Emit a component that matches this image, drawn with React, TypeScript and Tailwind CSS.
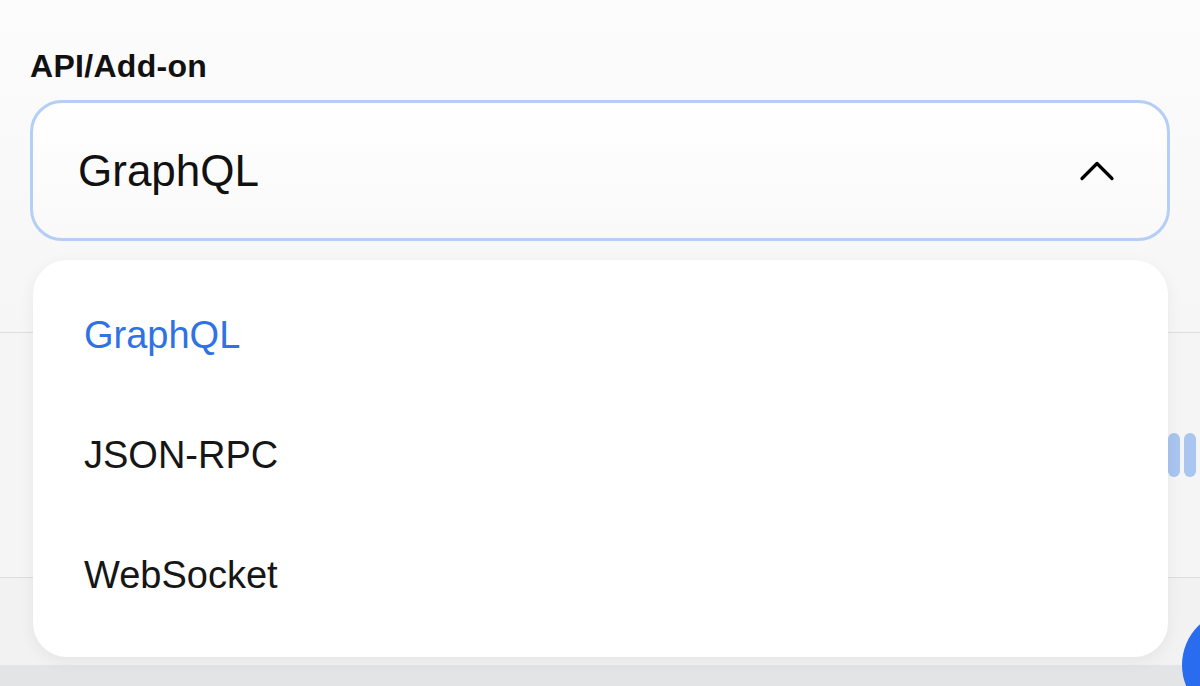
import { ChevronUp } from "lucide-react";

const options = ["GraphQL", "JSON-RPC", "WebSocket"];

export default function App() {
  const selected = "GraphQL";
  return (
    <div
      className="relative h-[686px] w-[1200px] overflow-hidden bg-[#f5f5f5]"
      style={{ fontFamily: '"Liberation Sans", Arial, sans-serif' }}
    >
      {/* field */}
      <div className="bg-gradient-to-b from-[#fcfcfc] to-[#f6f6f6] px-[30px] pt-[50px] pb-[91px]">
        <label className="block text-[32px] font-bold leading-none text-[#111] tracking-[0.3px]">
          API/Add-on
        </label>
        <div className="mt-[18px] flex h-[141px] w-[1140px] items-center justify-between rounded-[32px] border-[3px] border-[#b4cef6] bg-gradient-to-b from-white to-[#f9f9f9] pl-[45px] pr-[40px]">
          <span className="text-[44px] leading-none text-[#111]">{selected}</span>
          <ChevronUp className="h-[60px] w-[60px] text-black" strokeWidth={1.3} />
        </div>
      </div>

      {/* rows underneath */}
      <div className="border-t border-[#dedede] h-[245px] flex items-center justify-end pr-[4px]">
        <div className="flex gap-[4px]">
          <div className="h-[44px] w-[12px] rounded-full bg-[#a9c5f0]" />
          <div className="h-[44px] w-[12px] rounded-full bg-[#a9c5f0]" />
        </div>
      </div>
      <div className="border-t border-[#dedede] h-[88px] bg-[#f2f2f2]" />
      <div className="h-[30px] bg-[#e3e4e6]" />

      {/* dropdown menu */}
      <div className="absolute left-[33px] top-[260px] w-[1135px] h-[397px] rounded-[34px] bg-white pt-[15px] shadow-[0_4px_16px_rgba(0,0,0,0.06)]">
        {options.map((o) => (
          <div
            key={o}
            className={`flex h-[120px] items-center pl-[51px] text-[38px] leading-none ${
              o === selected ? "text-[#2f72e4]" : "text-[#161616]"
            }`}
          >
            {o}
          </div>
        ))}
      </div>

      {/* floating action button */}
      <div className="absolute left-[1182px] top-[610px] h-[110px] w-[110px] rounded-full bg-[#2a6cf0]" />
    </div>
  );
}
